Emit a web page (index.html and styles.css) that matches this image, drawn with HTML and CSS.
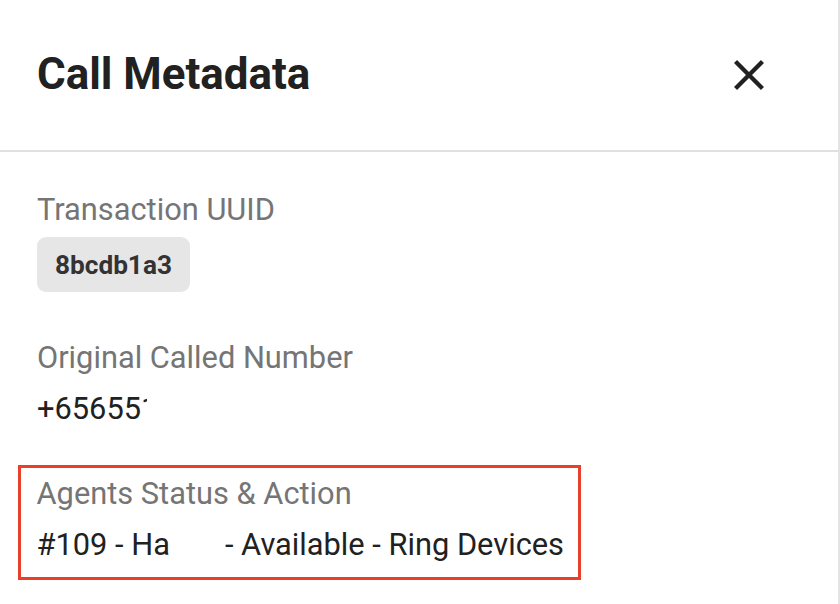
FILE: index.html
```html
<!DOCTYPE html>
<html lang="en">
<head>
<meta charset="utf-8">
<title>Call Metadata</title>
<link rel="stylesheet" href="styles.css">
</head>
<body>
<div class="drawer">
  <header class="drawer-header">
    <h1 class="drawer-title">Call Metadata</h1>
    <button class="close-btn" aria-label="Close">
      <svg viewBox="5 5 14 14" width="30" height="30" aria-hidden="true"><path d="M19 6.41L17.59 5 12 10.59 6.41 5 5 6.41 10.59 12 5 17.59 6.41 19 12 13.41 17.59 19 19 17.59 13.41 12z" fill="#212121"/></svg>
    </button>
  </header>
  <div class="drawer-body">
    <div class="field">
      <div class="field-label">Transaction UUID</div>
      <div class="chip">8bcdb1a3</div>
    </div>
    <div class="field">
      <div class="field-label">Original Called Number</div>
      <div class="field-value">+65655<span class="cut">1</span></div>
    </div>
    <div class="field field-highlight">
      <div class="field-label">Agents Status &amp; Action</div>
      <div class="field-value">#109 - Ha<span class="gap"></span>- Available - Ring Devices</div>
    </div>
  </div>
</div>
</body>
</html>
```

FILE: styles.css
```css
html, body {
  margin: 0;
  padding: 0;
  background: #ffffff;
}

body {
  font-family: Roboto, "Liberation Sans", Arial, sans-serif;
  color: #212121;
}

.drawer {
  width: 838px;
  height: 604px;
  border-right: 2px solid #e3e3e3;
  overflow: hidden;
}

.drawer-header {
  height: 150px;
  border-bottom: 2px solid #e0e0e0;
  display: flex;
  align-items: center;
  justify-content: space-between;
  padding: 0 74px 0 37px;
}

.drawer-title {
  margin: 0;
  font-size: 43.9px;
  font-weight: 700;
  line-height: 1;
  color: #212121;
}

.close-btn {
  border: 0;
  background: none;
  padding: 0;
  width: 30px;
  height: 30px;
  display: flex;
  align-items: center;
  justify-content: center;
}

.close-btn svg {
  display: block;
}

.drawer-body {
  padding: 32px 37px 0 37px;
}

.field {
  margin-bottom: 32px;
}

.field-label {
  font-size: 30.8px;
  line-height: 51px;
  color: #757575;
}

.field-value {
  font-size: 30.8px;
  line-height: 51px;
  color: #212121;
  white-space: nowrap;
}

.cut {
  display: inline-block;
  width: 6px;
  overflow: hidden;
  vertical-align: top;
}

.gap {
  display: inline-block;
  width: 55px;
}

.chip {
  display: inline-flex;
  align-items: center;
  height: 55px;
  margin-top: 2px;
  margin-bottom: 8px;
  padding: 0 18px;
  border-radius: 9px;
  background: #e6e6e6;
  color: #333333;
  font-size: 26.2px;
  font-weight: 700;
}

.field-highlight {
  width: fit-content;
  margin-left: -19px;
  margin-top: -1px;
  padding: 0 14px 7px 15.5px;
  border: 3.5px solid #e8402b;
}
```
